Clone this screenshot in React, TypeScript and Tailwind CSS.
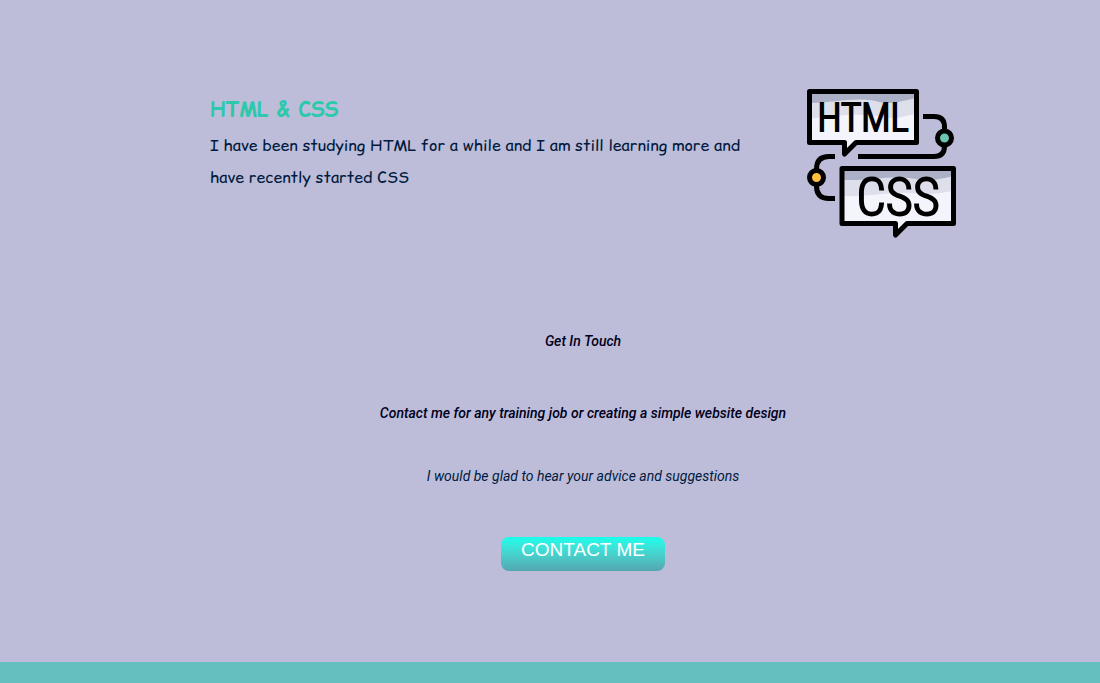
function HtmlCssIcon() {
  return (
    <svg viewBox="0 0 150 150" className="size-[150px] shrink-0" role="img" aria-label="HTML and CSS">
      <path d="M3 3H111V55H50L39 66V55H3Z" fill="#f4f5fc" />
      <path d="M3 3H111V26C100 27 92 32 78 29C55 25 30 27 3 31Z" fill="#dde0ea" />
      <path d="M3 3H111V10C98 12 88 17 73 14C52 8 30 15 3 15Z" fill="#abb0c6" />
      <path d="M36 80H148V136H101L90 147V136H36Z" fill="#f4f5fc" />
      <path d="M36 80H148V103C132 105 122 108 105 105C82 104 62 109 36 108Z" fill="#dde0ea" />
      <path d="M36 80H148V88C138 90 125 94 110 91C85 86 68 93 36 92Z" fill="#abb0c6" />
      <g fill="none" stroke="#000" strokeWidth="5" strokeLinejoin="round">
        <path d="M3.5 3.5H110.5V54.5H50L38.5 66V54.5H3.5Z" />
        <path d="M36 80.5H147.5V135.5H101L89.5 147V135.5H36Z" />
        <path d="M117 28.5H128Q138.500 28.500 138.500 39V42M138.500 58Q138.500 68.500 128 68.500H52" />
        <path d="M29 68.500H23Q10.500 68.500 10.500 81M10.500 98Q10.500 110.500 23 110.500H29" />
        <circle cx="138.500" cy="50" r="7" fill="#6cc5b2" />
        <circle cx="10.500" cy="89.500" r="7" fill="#ffbe3d" />
      </g>
      <g fill="#000" stroke="#000" strokeWidth="2" textAnchor="middle" fontWeight="300" fontFamily="'Roboto Condensed', 'Liberation Sans Narrow', 'Liberation Sans', sans-serif">
        <text x="57" y="43" fontSize="39">HTML</text>
        <text x="92" y="127" fontSize="52">CSS</text>
      </g>
    </svg>
  );
}

export default function App() {
  return (
    <div className="flex min-h-screen flex-col bg-[#bdbdd9] font-[Roboto,sans-serif]">
      <main className="grow pb-[91px] pl-[66px] pt-[88px]">
        <section className="mx-auto flex max-w-[746px] items-start justify-between">
          <div className="w-[540px] pt-2 font-['Comic_Sans_MS','Comic_Relief',cursive] text-[#001a40]">
            <h2 className="text-xl font-bold leading-7 text-[#2dc9ad]">HTML &amp; CSS</h2>
            <p className="pt-[5px] text-base leading-8">
              I have been studying HTML for a while and I am still learning more and have recently started CSS
            </p>
          </div>
          <HtmlCssIcon />
        </section>
        <section className="flex flex-col items-center pt-[93px] text-center text-sm italic leading-5 text-[#000020]">
          <h2 className="font-medium">Get In Touch</h2>
          <h3 className="pt-[52px] font-medium">
            Contact me for any training job or creating a simple website design
          </h3>
          <p className="pt-[43px] text-[#001a40]">I would be glad to hear your advice and suggestions</p>
          <button
            type="button"
            className="mt-[51px] h-[34px] rounded-lg bg-linear-to-b from-[#14ffec] to-[#53a6b0] px-5 pb-2 font-['Liberation_Sans',sans-serif] text-[19px] not-italic leading-6 text-white"
          >
            CONTACT ME
          </button>
        </section>
      </main>
      <footer className="h-[21px] bg-[#66bfbf]" />
    </div>
  );
}
